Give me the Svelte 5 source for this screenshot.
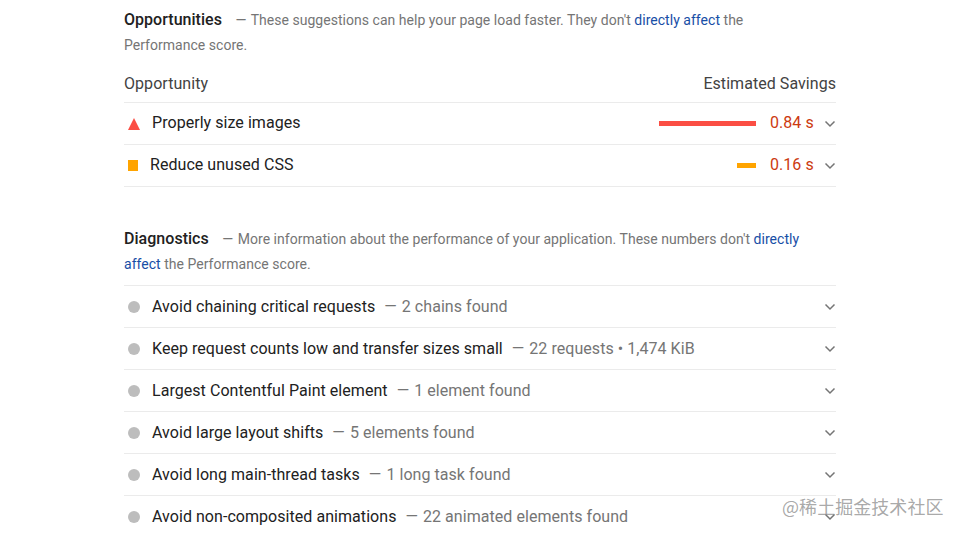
<script>
  const opportunities = [
    { name: 'Properly size images', shape: 'fail', bar: 97, barClass: 'bar-fail', value: '0.84 s' },
    { name: 'Reduce unused CSS', shape: 'average', bar: 19, barClass: 'bar-average', value: '0.16 s' },
  ];

  const diagnostics = [
    { name: 'Avoid chaining critical requests', detail: '2 chains found' },
    { name: 'Keep request counts low and transfer sizes small', detail: '22 requests • 1,474 KiB' },
    { name: 'Largest Contentful Paint element', detail: '1 element found' },
    { name: 'Avoid large layout shifts', detail: '5 elements found' },
    { name: 'Avoid long main-thread tasks', detail: '1 long task found' },
    { name: 'Avoid non-composited animations', detail: '22 animated elements found' },
  ];
</script>

{#snippet chevron()}
  <svg class="chevron" width="12" height="8" viewBox="0 0 12 8">
    <path d="M1.5 1.5 L6 6 L10.5 1.5" fill="none" stroke="#757575" stroke-width="1.5" />
  </svg>
{/snippet}

<div class="page">
  <section class="opportunities">
    <div class="section-head">
      <span class="title">Opportunities</span>
      <span class="dash">—</span>
      These suggestions can help your page load faster. They don't
      <a href="#top">directly affect</a> the Performance score.
    </div>
    <div class="columns">
      <span>Opportunity</span>
      <span>Estimated Savings</span>
    </div>
    <div class="list">
      {#each opportunities as item}
        <div class="row">
          <span class="marker marker-{item.shape}"></span>
          <span class="name">{item.name}</span>
          <span class="bar {item.barClass}" style="width: {item.bar}px"></span>
          <span class="value">{item.value}</span>
          {@render chevron()}
        </div>
      {/each}
    </div>
  </section>

  <section class="diagnostics">
    <div class="section-head">
      <span class="title">Diagnostics</span>
      <span class="dash">—</span>
      More information about the performance of your application. These numbers don't
      <a href="#top">directly affect</a> the Performance score.
    </div>
    <div class="list">
      {#each diagnostics as item}
        <div class="row">
          <span class="marker marker-info"></span>
          <span class="name">{item.name}</span>
          <span class="detail"><span class="detail-dash">—</span>{item.detail}</span>
          {@render chevron()}
        </div>
      {/each}
    </div>
  </section>

  <div class="watermark">@稀土掘金技术社区</div>
</div>

<style>
  :global(body) {
    margin: 0;
    background: #fff;
  }

  .page {
    position: relative;
    width: 960px;
    height: 535px;
    overflow: hidden;
    padding: 7px 124px 0;
    box-sizing: border-box;
    font-family: Roboto, "Liberation Sans", sans-serif;
    color: #212121;
    letter-spacing: 0.05px;
  }

  .section-head {
    padding-right: 20px;
    font-size: 14px;
    line-height: 25px;
    letter-spacing: 0.03px;
    color: #757575;
  }

  .title {
    font-size: 16px;
    font-weight: 500;
    color: #212121;
  }

  .dash {
    margin: 0 1px 0 10px;
  }

  .section-head a {
    color: #174ea6;
    text-decoration: none;
  }

  .columns {
    display: flex;
    justify-content: space-between;
    height: 44px;
    padding-top: 14px;
    box-sizing: border-box;
    font-size: 16px;
    line-height: 24px;
    color: #424242;
  }

  .list {
    border-bottom: 1px solid #ebebeb;
  }

  .row {
    display: flex;
    align-items: center;
    height: 42px;
    box-sizing: border-box;
    border-top: 1px solid #ebebeb;
    font-size: 16px;
  }

  .name {
    margin-left: 12px;
    color: #212121;
  }

  .opportunities .name,
  .opportunities .value {
    margin-bottom: 2px;
  }

  .marker {
    flex: none;
    margin-left: 4px;
  }

  .marker-fail {
    width: 0;
    height: 0;
    border-left: 6px solid transparent;
    border-right: 6px solid transparent;
    border-bottom: 12px solid #fb4e44;
  }

  .marker-average {
    width: 10px;
    height: 11px;
    background: #ffa400;
  }

  .marker-info {
    width: 12px;
    height: 12px;
    border-radius: 50%;
    background: #bdbdbd;
  }

  .bar {
    height: 5px;
    margin-left: auto;
  }

  .bar-fail {
    background: #fb4e44;
  }

  .bar-average {
    background: #ffa400;
  }

  .value {
    width: 44px;
    margin-left: 14px;
    color: #cc3a10;
    white-space: nowrap;
  }

  .chevron {
    flex: none;
    margin-left: 10px;
  }

  .detail {
    color: #757575;
    margin-right: auto;
    margin-left: 9px;
  }

  .detail-dash {
    margin-right: 5px;
  }

  .diagnostics {
    margin-top: 39px;
  }

  .diagnostics .section-head {
    margin-bottom: 8px;
  }

  .watermark {
    position: absolute;
    left: 782px;
    top: 494px;
    font-family: "Noto Sans CJK SC", sans-serif;
    font-size: 18px;
    line-height: 24px;
    color: rgba(120, 120, 120, 0.65);
    white-space: nowrap;
  }
</style>
